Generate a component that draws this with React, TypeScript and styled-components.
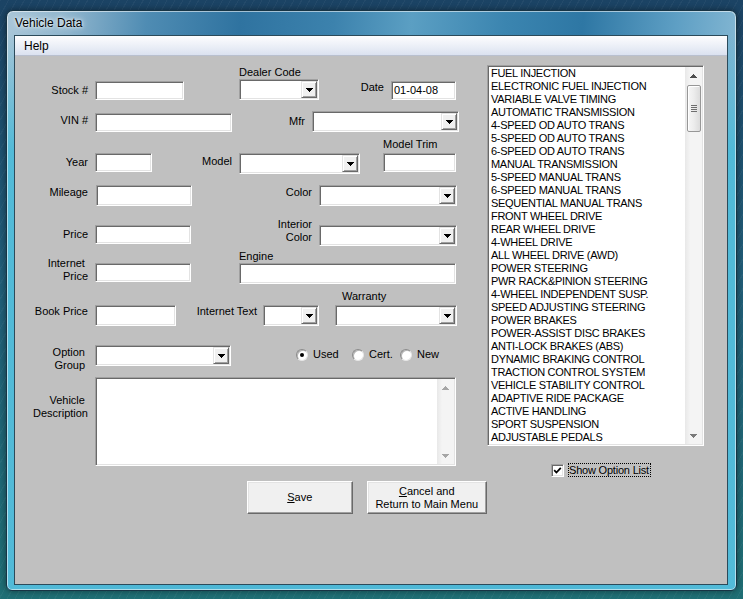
import React from "react";
import styled, { createGlobalStyle, css } from "styled-components";

const GlobalStyle = createGlobalStyle`
  html, body { margin: 0; padding: 0; }
  body {
    width: 743px;
    height: 599px;
    overflow: hidden;
    font-family: "Liberation Sans", Arial, sans-serif;
    background:
      repeating-linear-gradient(118deg, rgba(255,255,255,0.04) 0 1px, rgba(255,255,255,0) 1px 7px),
      linear-gradient(180deg, #1b4364 0%, #215d78 45%, #1f6e74 100%);
  }
  * { box-sizing: border-box; }
`;

const Desktop = styled.div`
  width: 743px;
  height: 599px;
  padding: 10px 0 0 6px;
`;

const Window = styled.div`
  width: 731px;
  height: 581px;
  border: 1px solid #173444;
  border-radius: 7px 7px 6px 6px;
  padding: 0 8px 5px 7px;
  display: flex;
  flex-direction: column;
  background:
    linear-gradient(to bottom, rgba(78, 186, 216, 0) 0px, rgba(78, 186, 216, 0) 22px, rgba(78, 186, 216, 0.95) 140px),
    linear-gradient(95deg, #a9c6d8 0%, #8fb5cd 8%, #4f8cb3 18%, #2f73a0 30%, #3c82ad 42%, #5b9fc3 52%, #3b85b0 64%, #2e77a4 74%, #5e9fc4 86%, #9cc6dc 100%);
  box-shadow: inset 0 0 0 1px rgba(255, 255, 255, 0.55), 0 0 6px rgba(0, 0, 0, 0.45);
`;

const TitleBar = styled.div`
  height: 24px;
  display: flex;
  align-items: center;
  padding-left: 1px;
`;

const TitleText = styled.span`
  font-size: 12px;
  color: #000;
  text-shadow: 0 0 6px rgba(255, 255, 255, 0.95), 0 0 3px rgba(255, 255, 255, 0.9);
`;

const InnerFrame = styled.div`
  flex: 1;
  border: 1px solid #2b4a5a;
  display: flex;
  flex-direction: column;
`;

const MenuBar = styled.div`
  height: 20px;
  display: flex;
  align-items: center;
  padding-left: 9px;
  background: linear-gradient(to bottom, #fdfdfe 0%, #eef1f8 45%, #dbe2f0 100%);
  border-bottom: 1px solid #b9c0cf;
`;

const MenuItem = styled.span`
  font-size: 12px;
  color: #000;
`;

const Client = styled.div`
  flex: 1;
  background: #c0c0c0;
  display: flex;
  font-size: 11px;
  color: #000;
`;

const LeftPane = styled.div`
  width: 472px;
  display: flex;
  flex-direction: column;
`;

const RightPane = styled.div`
  display: flex;
  flex-direction: column;
  padding-top: 9px;
`;

const Row = styled.div<{ $h: number }>`
  height: ${(p) => p.$h}px;
  display: flex;
  align-items: flex-end;
`;

const Field = styled.div<{ $ml?: number; $mb?: number }>`
  display: flex;
  align-items: flex-start;
  margin-left: ${(p) => p.$ml ?? 0}px;
  margin-bottom: ${(p) => p.$mb ?? 0}px;
`;

const Label = styled.div<{ $w: number; $mt?: number; $mb?: number; $gap?: number }>`
  width: ${(p) => p.$w}px;
  margin-top: ${(p) => p.$mt ?? 0}px;
  margin-bottom: ${(p) => p.$mb ?? 0}px;
  margin-right: ${(p) => p.$gap ?? 7}px;
  text-align: right;
  line-height: 13px;
  white-space: nowrap;
`;

const Stack = styled.div<{ $ml?: number; $mb?: number }>`
  display: flex;
  flex-direction: column;
  margin-left: ${(p) => p.$ml ?? 0}px;
  margin-bottom: ${(p) => p.$mb ?? 0}px;
`;

const TopLabel = styled.div<{ $pl?: number; $gap?: number }>`
  line-height: 13px;
  padding-left: ${(p) => p.$pl ?? 0}px;
  margin-bottom: ${(p) => p.$gap ?? 0}px;
  white-space: nowrap;
`;

const sunken = css`
  border: 1px solid;
  border-color: #a0a0a0 #ffffff #ffffff #a0a0a0;
  box-shadow: inset 1px 1px 0 #696969, inset -1px -1px 0 #e3e3e3;
  background: #ffffff;
`;

const TextBox = styled.div<{ $w: number; $h?: number }>`
  ${sunken};
  width: ${(p) => p.$w}px;
  height: ${(p) => p.$h ?? 19}px;
  padding: 1px 2px;
  line-height: ${(p) => (p.$h ?? 19) - 4}px;
  white-space: nowrap;
`;

const ComboFrame = styled.div<{ $w: number }>`
  ${sunken};
  width: ${(p) => p.$w}px;
  height: 21px;
  padding: 1px;
  display: flex;
  justify-content: flex-end;
`;

const DropButton = styled.div`
  width: 16px;
  height: 100%;
  background: #f0f0f0;
  border: 1px solid;
  border-color: #e3e3e3 #696969 #696969 #e3e3e3;
  box-shadow: inset 1px 1px 0 #ffffff, inset -1px -1px 0 #a0a0a0;
  display: flex;
  align-items: center;
  justify-content: center;
`;

const Tri = ({ up, color = "#000" }: { up?: boolean; color?: string }) => {
  const rows = [7, 5, 3, 1];
  return (
    <svg width="7" height="4" viewBox="0 0 7 4" shapeRendering="crispEdges">
      {rows.map((w, i) => (
        <rect key={i} x={(7 - w) / 2} y={up ? 3 - i : i} width={w} height={1} fill={color} />
      ))}
    </svg>
  );
};

const ComboBox = ({ w }: { w: number }) => (
  <ComboFrame $w={w}>
    <DropButton>
      <Tri />
    </DropButton>
  </ComboFrame>
);

const RadioGroup = styled.div<{ $ml: number; $mb: number }>`
  display: flex;
  align-items: center;
  margin-left: ${(p) => p.$ml}px;
  margin-bottom: ${(p) => p.$mb}px;
`;

const RadioItem = styled.div<{ $w?: number }>`
  display: flex;
  align-items: center;
  width: ${(p) => (p.$w ? `${p.$w}px` : "auto")};
  line-height: 13px;
`;

const RadioCircle = styled.span<{ $on?: boolean }>`
  width: 12px;
  height: 12px;
  border-radius: 50%;
  margin-right: 5px;
  background: #ffffff;
  border: 1px solid;
  border-color: #8a8a8a #e6e6e6 #e6e6e6 #8a8a8a;
  box-shadow: inset 1px 1px 0 #b5b5b5;
  display: flex;
  align-items: center;
  justify-content: center;
  &::after {
    content: "";
    display: ${(p) => (p.$on ? "block" : "none")};
    width: 4px;
    height: 4px;
    border-radius: 50%;
    background: #000;
  }
`;

const MemoBox = styled.div`
  ${sunken};
  width: 361px;
  height: 89px;
  padding: 1px;
  display: flex;
  justify-content: flex-end;
`;

const ScrollTrack = styled.div`
  width: 17px;
  height: 100%;
  background: linear-gradient(to right, #e8e8e8 0%, #f4f4f4 30%, #f4f4f4 100%);
  display: flex;
  flex-direction: column;
  justify-content: space-between;
  align-items: stretch;
`;

const ArrowCell = styled.div`
  height: 17px;
  display: flex;
  align-items: center;
  justify-content: center;
`;

const ListBox = styled.div`
  ${sunken};
  width: 217px;
  height: 381px;
  padding: 1px;
  display: flex;
`;

const ListItems = styled.div`
  flex: 1;
  padding-left: 2px;
  line-height: 13px;
  letter-spacing: -0.3px;
  white-space: nowrap;
  overflow: hidden;
`;

const ListTrackBody = styled.div`
  flex: 1;
  display: flex;
  flex-direction: column;
  padding: 1px 0 0 2px;
`;

const Thumb = styled.div`
  width: 14px;
  height: 47px;
  border: 1px solid #979797;
  border-radius: 2px;
  background: linear-gradient(to right, #f6f6f6 0%, #ececec 50%, #dcdcdc 100%);
  box-shadow: inset 1px 1px 0 #ffffff;
  display: flex;
  flex-direction: column;
  align-items: center;
  justify-content: center;
  gap: 1px;
`;

const Grip = styled.span`
  width: 6px;
  height: 1px;
  background: #6e6e6e;
`;

const CheckRow = styled.div`
  display: flex;
  align-items: center;
  margin-top: 17px;
  margin-left: 64px;
`;

const CheckBox = styled.span`
  ${sunken};
  width: 13px;
  height: 13px;
  margin-right: 4px;
  display: flex;
  align-items: center;
  justify-content: center;
`;

const FocusLabel = styled.span`
  border: 1px dotted #000;
  line-height: 12px;
  padding: 0 1px 0 0;
  letter-spacing: -0.2px;
`;

const PushButton = styled.div<{ $w: number; $ml: number }>`
  width: ${(p) => p.$w}px;
  height: 33px;
  margin-left: ${(p) => p.$ml}px;
  background: #f0f0f0;
  border: 1px solid;
  border-color: #ffffff #696969 #696969 #ffffff;
  box-shadow: inset -1px -1px 0 #a0a0a0, inset 1px 1px 0 #e3e3e3;
  display: flex;
  flex-direction: column;
  align-items: center;
  justify-content: center;
  line-height: 13px;
  text-align: center;
`;

const Mnemonic = styled.span`
  text-decoration: underline;
`;

const OPTIONS = [
  "FUEL INJECTION",
  "ELECTRONIC FUEL INJECTION",
  "VARIABLE VALVE TIMING",
  "AUTOMATIC TRANSMISSION",
  "4-SPEED OD AUTO TRANS",
  "5-SPEED OD AUTO TRANS",
  "6-SPEED OD AUTO TRANS",
  "MANUAL TRANSMISSION",
  "5-SPEED MANUAL TRANS",
  "6-SPEED MANUAL TRANS",
  "SEQUENTIAL MANUAL TRANS",
  "FRONT WHEEL DRIVE",
  "REAR WHEEL DRIVE",
  "4-WHEEL DRIVE",
  "ALL WHEEL DRIVE (AWD)",
  "POWER STEERING",
  "PWR RACK&PINION STEERING",
  "4-WHEEL INDEPENDENT SUSP.",
  "SPEED ADJUSTING STEERING",
  "POWER BRAKES",
  "POWER-ASSIST DISC BRAKES",
  "ANTI-LOCK BRAKES (ABS)",
  "DYNAMIC BRAKING CONTROL",
  "TRACTION CONTROL SYSTEM",
  "VEHICLE STABILITY CONTROL",
  "ADAPTIVE RIDE PACKAGE",
  "ACTIVE HANDLING",
  "SPORT SUSPENSION",
  "ADJUSTABLE PEDALS",
];

export default function App() {
  return (
    <>
      <GlobalStyle />
      <Desktop>
        <Window>
          <TitleBar>
            <TitleText>Vehicle Data</TitleText>
          </TitleBar>
          <InnerFrame>
            <MenuBar>
              <MenuItem>Help</MenuItem>
            </MenuBar>
            <Client>
              <LeftPane>
                <Row $h={44}>
                  <Field>
                    <Label $w={73} $mt={3}>Stock #</Label>
                    <TextBox $w={89} />
                  </Field>
                  <Stack $ml={55}>
                    <TopLabel>Dealer Code</TopLabel>
                    <ComboBox w={80} />
                  </Stack>
                  <Field>
                    <Label $w={65} $mt={0}>Date</Label>
                    <TextBox $w={65}>01-04-08</TextBox>
                  </Field>
                </Row>
                <Row $h={32}>
                  <Field>
                    <Label $w={73} $mt={1}>VIN #</Label>
                    <TextBox $w={137} />
                  </Field>
                  <Field>
                    <Label $w={73} $mt={4}>Mfr</Label>
                    <ComboBox w={147} />
                  </Field>
                </Row>
                <Row $h={42}>
                  <Field $mb={2}>
                    <Label $w={73} $mt={3}>Year</Label>
                    <TextBox $w={57} />
                  </Field>
                  <Field>
                    <Label $w={80} $mt={2}>Model</Label>
                    <ComboBox w={121} />
                  </Field>
                  <Stack $ml={23} $mb={2}>
                    <TopLabel $gap={2}>Model Trim</TopLabel>
                    <TextBox $w={73} />
                  </Stack>
                </Row>
                <Row $h={32}>
                  <Field>
                    <Label $w={73} $mt={1} $gap={8}>Mileage</Label>
                    <TextBox $w={96} $h={21} />
                  </Field>
                  <Field>
                    <Label $w={120} $mt={1}>Color</Label>
                    <ComboBox w={138} />
                  </Field>
                </Row>
                <Row $h={40}>
                  <Field $mb={2}>
                    <Label $w={73} $mt={3}>Price</Label>
                    <TextBox $w={96} />
                  </Field>
                  <Field>
                    <Label $w={121} $mt={-7}>
                      Interior
                      <br />
                      Color
                    </Label>
                    <ComboBox w={138} />
                  </Field>
                </Row>
                <Row $h={38}>
                  <Field $mb={2}>
                    <Label $w={73} $mt={-6} $mb={-2}>
                      Internet{"\u00a0"}
                      <br />
                      Price
                    </Label>
                    <TextBox $w={96} />
                  </Field>
                  <Stack $ml={48}>
                    <TopLabel>Engine</TopLabel>
                    <TextBox $w={217} $h={21} />
                  </Stack>
                </Row>
                <Row $h={42}>
                  <Field>
                    <Label $w={73} $mt={0}>Book Price</Label>
                    <TextBox $w={81} $h={21} />
                  </Field>
                  <Field>
                    <Label $w={81} $mt={0} $gap={6}>Internet Text</Label>
                    <ComboBox w={56} />
                  </Field>
                  <Stack $ml={16}>
                    <TopLabel $pl={7} $gap={2}>Warranty</TopLabel>
                    <ComboBox w={122} />
                  </Stack>
                </Row>
                <Row $h={40}>
                  <Field>
                    <Label $w={70} $mt={1} $mb={-8} $gap={10}>
                      Option
                      <br />
                      Group
                    </Label>
                    <ComboBox w={136} />
                  </Field>
                  <RadioGroup $ml={65} $mb={5}>
                    <RadioItem $w={56}>
                      <RadioCircle $on />
                      Used
                    </RadioItem>
                    <RadioItem $w={48}>
                      <RadioCircle />
                      Cert.
                    </RadioItem>
                    <RadioItem>
                      <RadioCircle />
                      New
                    </RadioItem>
                  </RadioGroup>
                </Row>
                <Row $h={100}>
                  <Field>
                    <Label $w={73} $mt={17}>
                      Vehicle{"\u00a0"}
                      <br />
                      Description
                    </Label>
                    <MemoBox>
                      <ScrollTrack>
                        <ArrowCell>
                          <Tri up color="#a6a6a6" />
                        </ArrowCell>
                        <ArrowCell>
                          <Tri color="#a6a6a6" />
                        </ArrowCell>
                      </ScrollTrack>
                    </MemoBox>
                  </Field>
                </Row>
                <Row $h={48}>
                  <PushButton $w={106} $ml={232}>
                    <span>
                      <Mnemonic>S</Mnemonic>ave
                    </span>
                  </PushButton>
                  <PushButton $w={121} $ml={14}>
                    <span>
                      <Mnemonic>C</Mnemonic>ancel and
                    </span>
                    <span>Return to Main Menu</span>
                  </PushButton>
                </Row>
              </LeftPane>
              <RightPane>
                <ListBox>
                  <ListItems>
                    {OPTIONS.map((o) => (
                      <div key={o}>{o}</div>
                    ))}
                  </ListItems>
                  <ScrollTrack>
                    <ArrowCell>
                      <Tri up color="#4d4d4d" />
                    </ArrowCell>
                    <ListTrackBody>
                      <Thumb>
                        <Grip />
                        <Grip />
                        <Grip />
                        <Grip />
                      </Thumb>
                    </ListTrackBody>
                    <ArrowCell>
                      <Tri color="#7a7a7a" />
                    </ArrowCell>
                  </ScrollTrack>
                </ListBox>
                <CheckRow>
                  <CheckBox>
                    <svg width="9" height="9" viewBox="0 0 9 9">
                      <polyline points="1.2,4.2 3.4,6.5 7.8,1.8" fill="none" stroke="#000" strokeWidth="1.8" />
                    </svg>
                  </CheckBox>
                  <FocusLabel>Show Option List</FocusLabel>
                </CheckRow>
              </RightPane>
            </Client>
          </InnerFrame>
        </Window>
      </Desktop>
    </>
  );
}
